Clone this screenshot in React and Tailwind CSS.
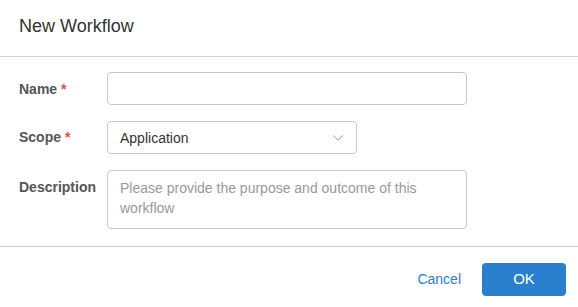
import { ChevronDown } from 'lucide-react'

export default function App() {
    return (
        <div className="w-[578px] h-[307px] bg-white font-['Helvetica','Liberation_Sans',Arial,sans-serif] text-[#333] overflow-hidden">
            <div className="h-[57px] flex items-center px-[19px] border-b border-[#cfcfcf]">
                <h2 className="text-[18px] text-[#333] -mt-[3px]">New Workflow</h2>
            </div>

            <div className="pt-[15px] pl-[19px] pb-[17px] space-y-[16px] border-b border-[#cfcfcf]">
                <div className="flex items-center">
                    <label className="w-[88px] text-[14px] font-bold text-[#555] pt-[1px]">
                        Name <span className="text-[#e5484d]">*</span>
                    </label>
                    <input
                        type="text"
                        className="w-[360px] h-[33px] border border-[#c8c8c8] rounded-[4px] px-3 text-[14px] outline-none"
                    />
                </div>

                <div className="flex items-center">
                    <label className="w-[88px] text-[14px] font-bold text-[#555]">
                        Scope <span className="text-[#e5484d]">*</span>
                    </label>
                    <div className="w-[250px] h-[33px] border border-[#c8c8c8] rounded-[4px] pl-[12px] pr-[9px] flex items-center justify-between">
                        <span className="text-[14px] text-[#333] pt-[2px]">Application</span>
                        <ChevronDown className="w-[18px] h-[18px] text-[#888]" strokeWidth={1.2} />
                    </div>
                </div>

                <div className="flex items-start">
                    <label className="w-[88px] pt-[7px] text-[14px] font-bold text-[#555]">
                        Description
                    </label>
                    <textarea
                        className="w-[360px] h-[59px] border border-[#c8c8c8] rounded-[4px] px-3 pt-[7px] pb-[5px] text-[14px] leading-[20px] resize-none outline-none placeholder:text-[#999]"
                        placeholder="Please provide the purpose and outcome of this workflow"
                    />
                </div>
            </div>

            <div className="flex items-center justify-end pt-[16px] pr-[12px] gap-[21px]">
                <button className="text-[14px] text-[#2a7fcf]">Cancel</button>
                <button className="w-[84px] h-[33px] rounded-[4px] bg-[#2a7fcf] text-white text-[15px]">OK</button>
            </div>
        </div>
    )
}
